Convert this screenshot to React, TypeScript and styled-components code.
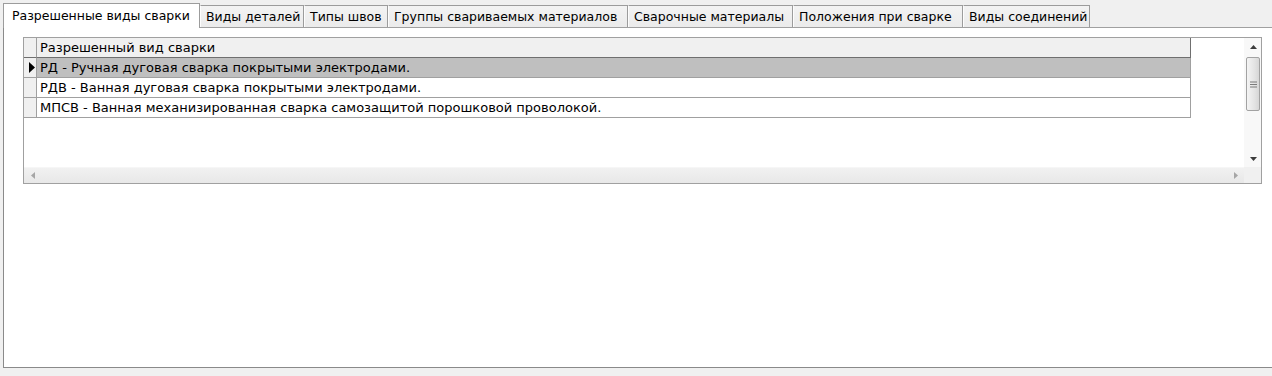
import React from 'react';
import styled, { createGlobalStyle } from 'styled-components';

const GlobalStyle = createGlobalStyle`
  html, body {
    margin: 0;
    padding: 0;
    background: #f0f0f0;
  }
  body {
    font-family: 'DejaVu Sans', Verdana, sans-serif;
    font-size: 13px;
    color: #000;
  }
`;

const tabs = [
  { title: 'Разрешенные виды сварки', width: 197 },
  { title: 'Виды деталей', width: 104 },
  { title: 'Типы швов', width: 84 },
  { title: 'Группы свариваемых материалов', width: 240 },
  { title: 'Сварочные материалы', width: 165 },
  { title: 'Положения при сварке', width: 170 },
  { title: 'Виды соединений', width: 127 },
];

const rows = [
  'РД - Ручная дуговая сварка покрытыми электродами.',
  'РДВ - Ванная дуговая сварка покрытыми электродами.',
  'МПСВ - Ванная механизированная сварка самозащитой порошковой проволокой.',
];

const App = () => {
  return (
    <Window>
      <GlobalStyle />
      <TabStrip>
        {tabs.map((t, i) => (
          <Tab key={t.title} $active={i === 0} $width={t.width}>
            {t.title}
          </Tab>
        ))}
      </TabStrip>
      <Page>
        <Grid>
          <GridBody>
            <Table>
              <HeaderIndicator />
              <HeaderCell>Разрешенный вид сварки</HeaderCell>
              {rows.map((r, i) => (
                <React.Fragment key={r}>
                  <RowIndicator>
                    {i === 0 && (
                      <svg width="6" height="11" viewBox="0 0 6 11">
                        <path d="M0 0 L6 5.5 L0 11 Z" fill="#000" />
                      </svg>
                    )}
                  </RowIndicator>
                  <Cell $selected={i === 0}>{r}</Cell>
                </React.Fragment>
              ))}
            </Table>
          </GridBody>
          <VScroll>
            <ArrowButton>
              <svg width="7" height="4" viewBox="0 0 7 4">
                <path d="M0 4 L3.5 0 L7 4 Z" fill="#3c3c3c" />
              </svg>
            </ArrowButton>
            <VTrack>
              <Thumb>
                <svg width="7" height="7" viewBox="0 0 7 7">
                  <path d="M0 1 H7 M0 3.5 H7 M0 6 H7" stroke="#7a7a7a" strokeWidth="1" />
                </svg>
              </Thumb>
            </VTrack>
            <ArrowButton>
              <svg width="7" height="4" viewBox="0 0 7 4">
                <path d="M0 0 L7 0 L3.5 4 Z" fill="#3c3c3c" />
              </svg>
            </ArrowButton>
          </VScroll>
          <HScroll>
            <HArrow>
              <svg width="4" height="7" viewBox="0 0 4 7">
                <path d="M4 0 L0 3.5 L4 7 Z" fill="#a6a6a6" />
              </svg>
            </HArrow>
            <HArrow>
              <svg width="4" height="7" viewBox="0 0 4 7">
                <path d="M0 0 L4 3.5 L0 7 Z" fill="#a6a6a6" />
              </svg>
            </HArrow>
          </HScroll>
          <Corner />
        </Grid>
      </Page>
    </Window>
  );
};

const Window = styled.div`
  width: 1272px;
  height: 376px;
  overflow: hidden;
  background: #f0f0f0;
`;

const TabStrip = styled.div`
  display: flex;
  align-items: flex-end;
  height: 27px;
  padding-left: 3px;
  box-sizing: border-box;
`;

const Tab = styled.div<{ $active?: boolean; $width: number }>`
  display: flex;
  align-items: center;
  box-sizing: border-box;
  width: ${(p) => p.$width}px;
  flex: none;
  overflow: hidden;
  white-space: nowrap;
  font-size: 12.5px;
  padding-left: ${(p) => (p.$active ? '8px' : '5px')};
  padding-bottom: ${(p) => (p.$active ? '2px' : '0')};
  height: ${(p) => (p.$active ? '25px' : '22px')};
  margin-bottom: ${(p) => (p.$active ? '-1px' : '0')};
  background: ${(p) => (p.$active ? '#fff' : 'linear-gradient(#f3f3f3, #ebebeb)')};
  border: 1px solid #9c9c9c;
  border-bottom: none;
  border-left-color: ${(p) => (p.$active ? '#9c9c9c' : '#fdfdfd')};
  position: relative;
  z-index: ${(p) => (p.$active ? 1 : 0)};
`;

const Page = styled.div`
  margin-left: 3px;
  height: 341px;
  box-sizing: border-box;
  background: #fff;
  border-top: 1px solid #a0a0a0;
  border-left: 1px solid #8a8a8a;
  border-bottom: 1px solid #8a8a8a;
  padding: 9px 0 0 19px;
`;

const Grid = styled.div`
  width: 1239px;
  height: 147px;
  box-sizing: border-box;
  border: 1px solid #a0a0a0;
  display: grid;
  grid-template-columns: 1220px 17px;
  grid-template-rows: 129px 16px;
  background: #fff;
`;

const GridBody = styled.div`
  overflow: hidden;
`;

const Table = styled.div`
  display: grid;
  grid-template-columns: 13px 1154px;
  grid-auto-rows: 20px;
`;

const HeaderIndicator = styled.div`
  background: #f0f0f0;
  border-right: 1px solid #a0a0a0;
  border-bottom: 1px solid #6f6f6f;
`;

const HeaderCell = styled.div`
  background: #f0f0f0;
  border-right: 1px solid #6f6f6f;
  border-bottom: 1px solid #6f6f6f;
  padding-left: 3px;
  display: flex;
  align-items: center;
  white-space: nowrap;
`;

const RowIndicator = styled.div`
  background: #f0f0f0;
  border-right: 1px solid #a0a0a0;
  border-bottom: 1px solid #a0a0a0;
  display: flex;
  align-items: center;
  padding-left: 5px;
`;

const Cell = styled.div<{ $selected?: boolean }>`
  background: ${(p) => (p.$selected ? '#bfbfbf' : '#fff')};
  border-right: 1px solid #a0a0a0;
  border-bottom: 1px solid #a0a0a0;
  padding-left: 3px;
  display: flex;
  align-items: center;
  white-space: nowrap;
`;

const VScroll = styled.div`
  grid-row: 1;
  grid-column: 2;
  display: flex;
  flex-direction: column;
  background: #f8f8f8;
  padding: 0 1px 0 2px;
`;

const ArrowButton = styled.div`
  height: 17px;
  flex: none;
  display: flex;
  align-items: center;
  justify-content: center;
`;

const VTrack = styled.div`
  flex: 1;
  padding-top: 2px;
`;

const Thumb = styled.div`
  height: 54px;
  box-sizing: border-box;
  border: 1px solid #a2a2a2;
  border-radius: 2px;
  background: linear-gradient(90deg, #f4f4f4, #e4e4e4 60%, #d6d6d6);
  display: flex;
  align-items: center;
  justify-content: center;
`;

const HScroll = styled.div`
  grid-row: 2;
  grid-column: 1;
  display: flex;
  justify-content: space-between;
  background: linear-gradient(#f1f1f1, #e8e8e8);
  border-top: 1px solid #f6f6f6;
`;

const HArrow = styled.div`
  width: 17px;
  display: flex;
  align-items: center;
  justify-content: center;
`;

const Corner = styled.div`
  grid-row: 2;
  grid-column: 2;
  background: #f0f0f0;
`;

export default App;
